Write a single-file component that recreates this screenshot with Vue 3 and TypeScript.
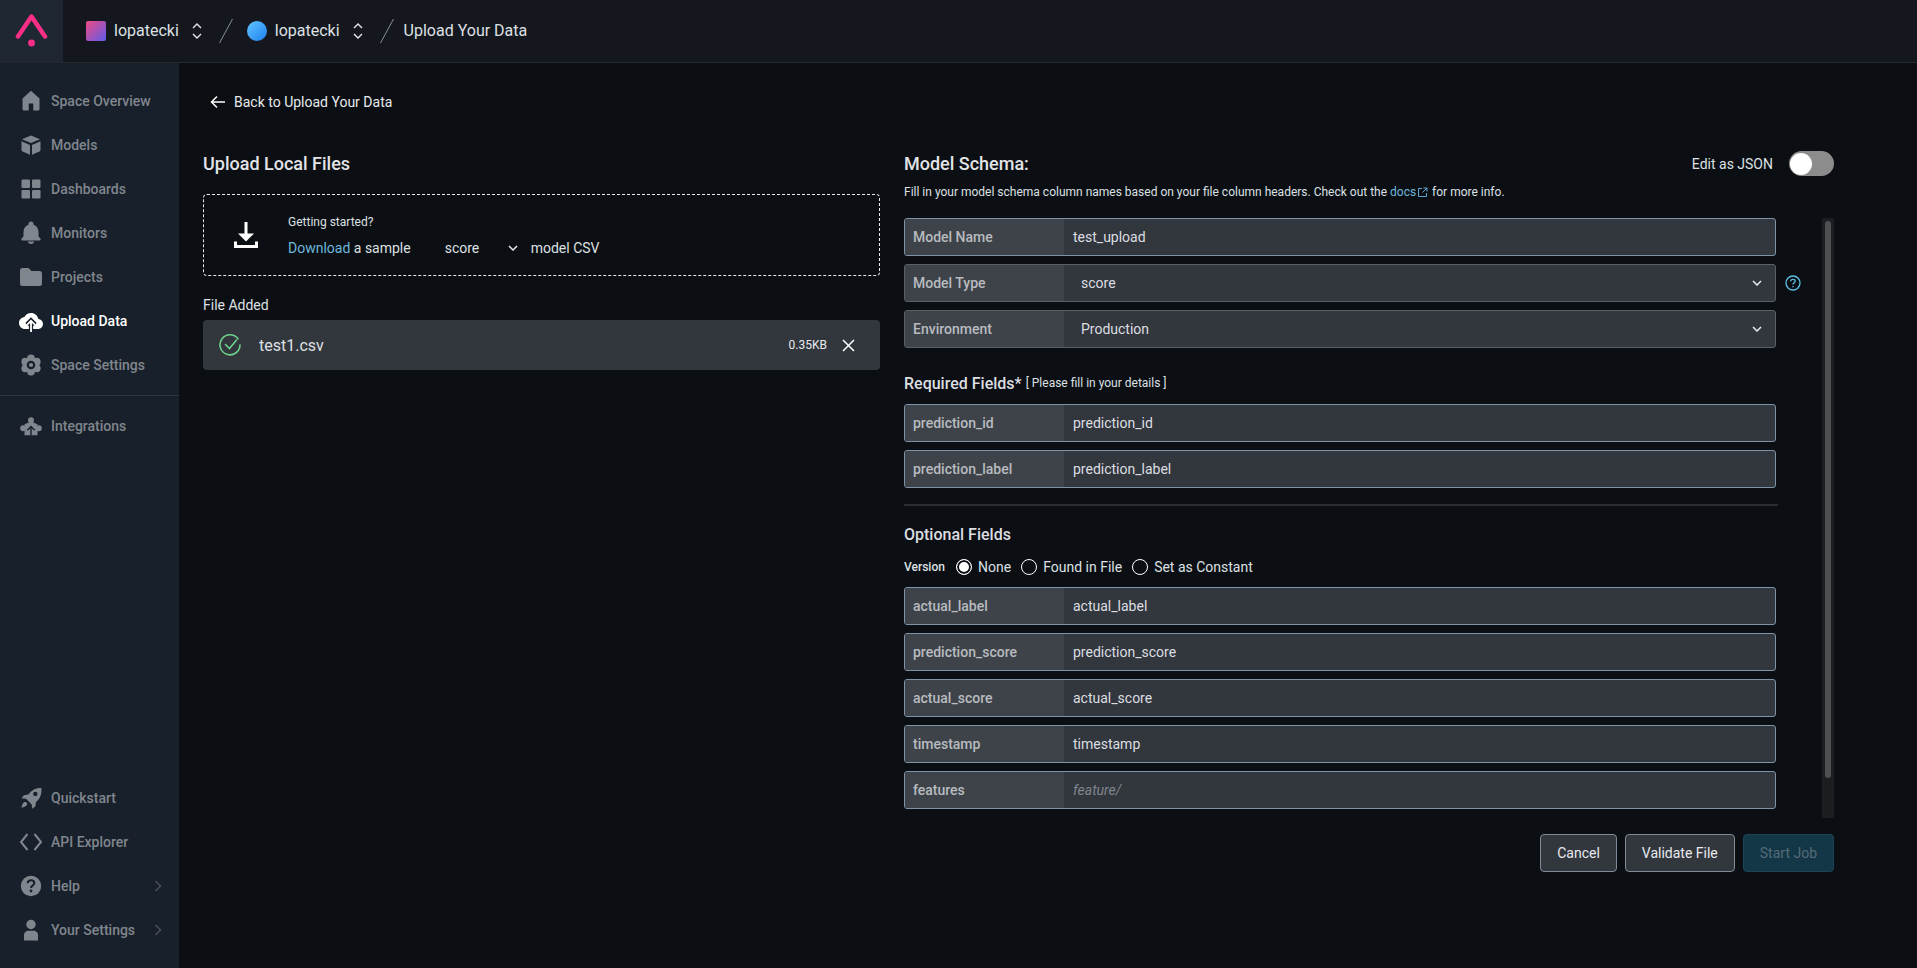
<script setup lang="ts">
interface NavItem { label: string; icon: string; active?: boolean; more?: boolean }
const topNav: NavItem[] = [
  { label: 'Space Overview', icon: 'home' },
  { label: 'Models', icon: 'cube' },
  { label: 'Dashboards', icon: 'grid' },
  { label: 'Monitors', icon: 'bell' },
  { label: 'Projects', icon: 'folder' },
  { label: 'Upload Data', icon: 'cloud', active: true },
  { label: 'Space Settings', icon: 'gear' },
]
const bottomNav: NavItem[] = [
  { label: 'Quickstart', icon: 'rocket' },
  { label: 'API Explorer', icon: 'code' },
  { label: 'Help', icon: 'help', more: true },
  { label: 'Your Settings', icon: 'user', more: true },
]
const gearLobes = [0, 60, 120, 180, 240, 300].map((deg) => ({
  x: 12 + 6.6 * Math.sin((deg * Math.PI) / 180),
  y: 12 - 6.6 * Math.cos((deg * Math.PI) / 180),
}))
const baseFields = [
  { label: 'Model Name', value: 'test_upload', active: true },
  { label: 'Model Type', value: 'score', select: true },
  { label: 'Environment', value: 'Production', select: true },
]
const requiredFields = [
  { label: 'prediction_id', value: 'prediction_id', active: true },
  { label: 'prediction_label', value: 'prediction_label', active: true },
]
const optionalFields = [
  { label: 'actual_label', value: 'actual_label', active: true },
  { label: 'prediction_score', value: 'prediction_score', active: true },
  { label: 'actual_score', value: 'actual_score', active: true },
  { label: 'timestamp', value: 'timestamp', active: true },
  { label: 'features', value: 'feature/', active: true, placeholder: true },
]
const radios = [
  { label: 'None', on: true },
  { label: 'Found in File', on: false },
  { label: 'Set as Constant', on: false },
]
</script>

<template>
  <div class="page">
    <header class="topbar">
      <div class="logo">
        <svg width="34" height="34" viewBox="0 0 34 34" fill="none">
          <path d="M3 22.500 16.500 2.500 30 22.500" stroke="#f92f87" stroke-width="4.500" stroke-linecap="round" stroke-linejoin="round" />
          <circle cx="16.500" cy="29" r="3.400" fill="#f92f87" />
        </svg>
      </div>
      <div class="crumbs">
        <span class="swatch square"></span>
        <span class="crumb">lopatecki</span>
        <svg class="updown" width="12" height="20" viewBox="0 0 12 20" fill="none" stroke="#e4e6e9" stroke-width="1.400"><path d="M2 7 6 3l4 4M2 13l4 4 4-4" /></svg>
        <svg class="slash" width="14" height="24" viewBox="0 0 14 24" fill="none" stroke="#8b9096" stroke-width="1"><path d="M13.500 0 .5 24" /></svg>
        <span class="swatch round"></span>
        <span class="crumb">lopatecki</span>
        <svg class="updown" width="12" height="20" viewBox="0 0 12 20" fill="none" stroke="#e4e6e9" stroke-width="1.400"><path d="M2 7 6 3l4 4M2 13l4 4 4-4" /></svg>
        <svg class="slash slash-last" width="14" height="24" viewBox="0 0 14 24" fill="none" stroke="#8b9096" stroke-width="1"><path d="M13.500 0 .5 24" /></svg>
        <span class="crumb last">Upload Your Data</span>
      </div>
    </header>

    <div class="body">
      <aside class="sidebar">
        <nav class="nav-top">
          <template v-for="item in topNav" :key="item.label">
            <a class="nav-item" :class="{ active: item.active }">
              <span class="nav-icon">
                <svg width="24" height="24" viewBox="0 0 24 24" fill="currentColor">
                  <path v-if="item.icon === 'home'" fill-rule="evenodd" d="M12 1.800 20.500 9.500V20a1.600 1.600 0 0 1-1.600 1.600H5.100A1.600 1.600 0 0 1 3.500 20V9.500ZM9.700 14.500v7.100h4.600v-7.100Z" />
                  <template v-else-if="item.icon === 'cube'">
                    <path d="M12 2.500 21 6.300 12 10 3 6.300Z" />
                    <path d="M2.500 8.300 11 12v9.800L3.600 18.600a1.800 1.800 0 0 1-1.100-1.600Z" />
                    <path d="M21.500 8.300 13 12v9.800l7.400-3.200a1.800 1.800 0 0 0 1.100-1.600Z" />
                  </template>
                  <template v-else-if="item.icon === 'grid'">
                    <rect x="2.500" y="2.500" width="8.500" height="8.500" rx="1.200" />
                    <rect x="13" y="2.500" width="8.500" height="8.500" rx="1.200" />
                    <rect x="2.500" y="13" width="8.500" height="8.500" rx="1.200" />
                    <rect x="13" y="13" width="8.500" height="8.500" rx="1.200" />
                  </template>
                  <path v-else-if="item.icon === 'bell'" d="M12 23c1.700 0 3-1 3.200-2.500H8.800C9 22 10.300 23 12 23Zm7.500-7.500V11c0-3.600-1.800-6.400-5-7.300V3a2.500 2.500 0 0 0-5 0v.7c-3.200.9-5 3.700-5 7.300v4.500L2.600 17.600c-.7.800-.2 1.900.8 1.900h17.200c1 0 1.500-1.100.8-1.900Z" />
                  <path v-else-if="item.icon === 'folder'" d="M9.500 3H3.500A2.500 2.500 0 0 0 1 5.500v13A2.500 2.500 0 0 0 3.500 21h17a2.500 2.500 0 0 0 2.500-2.500v-10A2.500 2.500 0 0 0 20.500 6H12.500Z" />
                  <template v-else-if="item.icon === 'cloud'">
                    <path d="M19.350 10.040C18.670 6.590 15.640 4 12 4 9.110 4 6.600 5.640 5.350 8.040 2.340 8.360 0 10.910 0 14c0 3.310 2.690 6 6 6h13c2.760 0 5-2.240 5-5 0-2.640-2.050-4.780-4.650-4.960Z" />
                    <path d="M12 22V12M7.800 15.500 12 11.300l4.200 4.200" fill="none" stroke="#18202b" stroke-width="4.200" />
                    <path d="M12 23V12M8 15.800 12 11.800l4 4" fill="none" stroke="#fff" stroke-width="1.800" />
                  </template>
                  <template v-else-if="item.icon === 'gear'">
                    <circle v-for="(l, i) in gearLobes" :key="i" :cx="l.x" :cy="l.y" r="3.900" />
                    <circle cx="12" cy="12" r="7" />
                    <circle cx="12" cy="12" r="4.300" fill="#18202b" />
                    <circle cx="12" cy="12" r="2.100" />
                  </template>
                </svg>
              </span>
              <span class="nav-label">{{ item.label }}</span>
            </a>
          </template>
        </nav>
        <div class="nav-divider"></div>
        <a class="nav-item integrations">
          <span class="nav-icon">
            <svg width="26" height="26" viewBox="0 0 26 26" fill="currentColor">
              <circle cx="13" cy="6.800" r="3.200" />
              <circle cx="4.500" cy="15.500" r="3.200" />
              <circle cx="21.500" cy="15.500" r="3.200" />
              <path d="M13 8 20 11.200V23H6V11.200Z" />
              <path d="M13 23v-9M9 17.500l4-4 4 4" fill="none" stroke="#18202b" stroke-width="1.500" />
            </svg>
          </span>
          <span class="nav-label">Integrations</span>
        </a>
        <div class="nav-spacer"></div>
        <nav class="nav-bottom">
          <a v-for="item in bottomNav" :key="item.label" class="nav-item">
            <span class="nav-icon">
              <svg width="24" height="24" viewBox="0 0 24 24" fill="currentColor">
                <template v-if="item.icon === 'rocket'">
                  <path fill-rule="evenodd" d="M22.300 1.700c-5.600.2-10 2.500-13 6.800l-4.400.7-2.300 3 4.500.6 5.600 5.600.6 4.300 3-2.300.7-4.400c4.300-3 6.100-8.700 5.300-14.300Zm-6 4a2.200 2.200 0 1 1 0 4.400 2.200 2.200 0 0 1 0-4.400Z" />
                  <path d="M5.500 16c1.800-.4 3 1 2.600 2.600-.4 1.500-3 2.800-5.600 3.200.4-2.700 1.400-5.400 3-5.800Z" />
                </template>
                <path v-else-if="item.icon === 'code'" d="M8.500 4 2 12l6.500 8M15.500 4 22 12l-6.500 8" fill="none" stroke="currentColor" stroke-width="2" />
                <template v-else-if="item.icon === 'help'">
                  <circle cx="12" cy="12" r="10.200" />
                  <path d="M8.700 9.300c0-1.900 1.400-3 3.300-3s3.300 1.100 3.300 2.800c0 2.400-3.300 2.400-3.300 4.900" fill="none" stroke="#18202b" stroke-width="2.100" />
                  <circle cx="12" cy="17" r="1.400" fill="#18202b" />
                </template>
                <template v-else-if="item.icon === 'user'">
                  <circle cx="12" cy="6.500" r="4.700" />
                  <path d="M5 22.500V17c0-2.600 2-4.200 4-4.200h6c2 0 4 1.600 4 4.200v5.500Z" />
                </template>
              </svg>
            </span>
            <span class="nav-label">{{ item.label }}</span>
            <svg v-if="item.more" class="nav-more" width="8" height="14" viewBox="0 0 8 14" fill="none" stroke="#4a5058" stroke-width="1.500"><path d="m1.500 2 5 5-5 5" /></svg>
          </a>
        </nav>
      </aside>

      <main class="main">
        <a class="back">
          <svg width="16" height="14" viewBox="0 0 16 14" fill="none" stroke="#fff" stroke-width="1.500"><path d="M15 7H1.500M7 1.500 1.500 7 7 12.500" /></svg>
          <span>Back to Upload Your Data</span>
        </a>

        <div class="columns">
          <section class="left">
            <div class="col-head"><h2 class="col-title">Upload Local Files</h2></div>
            <div class="dropbox">
              <svg class="dl-icon" width="24" height="26" viewBox="0 0 24 26" fill="#fff">
                <rect x="10.500" y="0" width="3" height="14" />
                <path d="M4 11.500h16l-8 8Z" />
                <path d="M0 19.500h3v3.500h18v-3.500h3V26H0Z" />
              </svg>
              <div class="drop-text">
                <div class="drop-small">Getting started?</div>
                <div class="drop-line">
                  <span class="link">Download</span>
                  <span>&nbsp;a sample</span>
                  <span class="drop-select">score</span>
                  <svg class="drop-chev" width="10" height="6" viewBox="0 0 10 6" fill="none" stroke="#e4e6e9" stroke-width="1.500"><path d="m1 1 4 4 4-4" /></svg>
                  <span>model CSV</span>
                </div>
              </div>
            </div>
            <div class="file-label">File Added</div>
            <div class="file-row">
              <svg width="22" height="22" viewBox="0 0 22 22" fill="none" stroke="#6ed18a" stroke-width="1.600">
                <path d="M19 4.800A10 10 0 1 0 21 11" stroke-linecap="round" />
                <path d="m6.500 10.500 4 4 7-8.500" stroke-linecap="round" />
              </svg>
              <span class="file-name">test1.csv</span>
              <span class="file-size">0.35KB</span>
              <svg width="13" height="13" viewBox="0 0 13 13" fill="none" stroke="#fff" stroke-width="1.500"><path d="m1 1 11 11M12 1 1 12" /></svg>
            </div>
          </section>

          <section class="right">
            <div class="col-head">
              <h2 class="col-title schema">Model Schema:</h2>
              <span class="json-label">Edit as JSON</span>
              <span class="toggle"><span class="knob"></span></span>
            </div>
            <p class="desc">
              Fill in your model schema column names based on your file column headers. Check out the
              <span class="link">docs</span>
              <svg class="ext" width="11" height="11" viewBox="0 0 11 11" fill="none" stroke="#5fa8d3" stroke-width="1"><path d="M5 1.500H1.500v8h8V6M6.500 1h3.500v3.500M10 1 5.500 5.500" /></svg>
              for more info.
            </p>

            <div class="scroller">
              <div class="form">
                <div v-for="f in baseFields" :key="f.label" class="row-wrap">
                  <div class="field" :class="{ active: f.active }">
                    <span class="field-label">{{ f.label }}</span>
                    <span class="field-value" :class="{ select: f.select }">{{ f.value }}</span>
                    <svg v-if="f.select" class="chev" width="10" height="6" viewBox="0 0 10 6" fill="none" stroke="#e9ebee" stroke-width="1.500"><path d="m1 1 4 4 4-4" /></svg>
                  </div>
                  <svg v-if="f.label === 'Model Type'" class="help" width="16" height="16" viewBox="0 0 16 16" fill="none" stroke="#5fc0e8" stroke-width="1.300">
                    <circle cx="8" cy="8" r="7" />
                    <path d="M5.800 6.300C5.800 5 6.800 4.300 8 4.300s2.200.7 2.200 1.900C10.200 7.800 8 7.800 8 9.600" />
                    <path d="M8 11v1.200" />
                  </svg>
                </div>

                <h3 class="section-title req"><span>Required Fields*</span><small>[ Please fill in your details ]</small></h3>
                <div v-for="f in requiredFields" :key="f.label" class="row-wrap">
                  <div class="field active">
                    <span class="field-label">{{ f.label }}</span>
                    <span class="field-value">{{ f.value }}</span>
                  </div>
                </div>

                <div class="rule"></div>

                <h3 class="section-title opt">Optional Fields</h3>
                <div class="version">
                  <span class="version-label">Version</span>
                  <label v-for="r in radios" :key="r.label" class="radio">
                    <span class="dot" :class="{ on: r.on }"></span>{{ r.label }}
                  </label>
                </div>
                <div v-for="f in optionalFields" :key="f.label" class="row-wrap">
                  <div class="field active">
                    <span class="field-label">{{ f.label }}</span>
                    <span class="field-value" :class="{ placeholder: f.placeholder }">{{ f.value }}</span>
                  </div>
                </div>
              </div>
              <div class="track"><div class="thumb"></div></div>
            </div>

            <div class="actions">
              <button class="btn">Cancel</button>
              <button class="btn">Validate File</button>
              <button class="btn primary">Start Job</button>
            </div>
          </section>
        </div>
      </main>
    </div>
  </div>
</template>

<style>
html, body { margin: 0; background: #0b0f13; }
</style>

<style scoped>
* { box-sizing: border-box; }
.page { width: 1917px; height: 968px; display: flex; flex-direction: column; background: #0b0f13; color: #e8eaed; font-family: Roboto, "Noto Sans", sans-serif; overflow: hidden; }
.topbar { height: 63px; flex: none; display: flex; background: #14171d; border-bottom: 1px solid #23272e; }
.logo { width: 63px; display: flex; align-items: center; justify-content: center; background: #1f2733; }
.crumbs { display: flex; align-items: center; padding-left: 23px; font-size: 16px; color: #dde0e4; }
.swatch { width: 20px; height: 20px; flex: none; margin-right: 8px; }
.square { border-radius: 2px; background: linear-gradient(135deg, #ee4a86, #5f5ce8); }
.round { border-radius: 50%; background: linear-gradient(135deg, #5fc6ff, #1f7fef); }
.crumb { line-height: 20px; }
.updown { margin-left: 12px; }
.slash { margin: 0 14px 0 16px; }
.slash-last { margin-right: 10px; }
.body { flex: 1; display: flex; min-height: 0; }
.sidebar { width: 179px; flex: none; background: #18202b; display: flex; flex-direction: column; padding: 16px 0 16px; }
.nav-item { height: 44px; display: flex; align-items: center; padding-left: 19px; color: #80868d; font-size: 14px; font-weight: 500; }
.nav-item.active { color: #fff; }
.nav-icon { width: 24px; height: 24px; display: flex; align-items: center; justify-content: center; margin-right: 8px; flex: none; }
.nav-more { margin-left: auto; margin-right: 17px; }
.nav-divider { height: 1px; background: #2e3540; margin: 8px 0; }
.nav-spacer { flex: 1; }
.main { flex: 1; padding: 0 83px 0 24px; min-width: 0; }
.back { display: flex; align-items: center; height: 20px; margin-top: 29px; padding-left: 7px; font-size: 14px; color: #e8eaed; }
.back svg { margin-right: 8px; }
.columns { display: flex; gap: 24px; margin-top: 39px; }
.left { width: 677px; flex: none; }
.right { flex: 1; min-width: 0; }
.col-head { height: 25px; display: flex; align-items: center; }
.col-title { margin: 0; font-size: 18px; font-weight: 500; color: #e2e4e7; }
.schema { margin-right: auto; }
.json-label { font-size: 14px; margin-right: 16px; color: #dde0e4; }
.toggle { width: 45px; height: 25px; border-radius: 13px; background: #8c8c8c; display: flex; align-items: center; padding-left: 1px; }
.knob { width: 22px; height: 22px; border-radius: 50%; background: #fff; }
.dropbox { height: 82px; margin-top: 18px; border: 1px dashed #e6e8ea; border-radius: 4px; display: flex; align-items: center; padding-left: 30px; }
.dl-icon { margin-right: 30px; }
.drop-small { font-size: 12px; line-height: 16px; color: #dde0e4; }
.drop-line { display: flex; align-items: center; margin-top: 9px; font-size: 14px; line-height: 18px; color: #dde0e4; }
.link { color: #6db7dc; }
.drop-select { margin-left: 34px; width: 63px; }
.drop-chev { margin-right: 13px; }
.file-label { margin-top: 21px; font-size: 14px; line-height: 16px; color: #dde0e4; }
.file-row { height: 50px; margin-top: 7px; background: #32363d; border-radius: 4px; display: flex; align-items: center; padding: 0 25px 0 16px; }
.file-name { margin-left: 18px; font-size: 16px; color: #dde0e4; }
.file-size { margin-left: auto; margin-right: 15px; font-size: 12px; color: #e8eaed; }
.desc { margin: 8px 0 0; height: 16px; font-size: 12px; line-height: 16px; color: #dde0e4; }
.ext { margin: 0 1px; vertical-align: -1.500px; }
.scroller { display: flex; height: 600px; margin-top: 18px; overflow: hidden; }
.form { flex: 1; min-width: 0; }
.row-wrap { display: flex; align-items: center; height: 38px; margin-bottom: 8px; position: relative; }
.field { width: 872px; height: 38px; flex: none; display: flex; align-items: center; background: #32363d; border: 1px solid #5a6068; border-radius: 3px; overflow: hidden; }
.field.active { border-color: #7f93a8; }
.field-label { width: 159px; height: 100%; flex: none; display: flex; align-items: center; padding-left: 8px; background: #3e434a; color: #b8bbbf; font-size: 14px; font-weight: 500; }
.field-value { padding-left: 9px; font-size: 14px; color: #dcdee1; }
.field-value.select { padding-left: 17px; }
.field-value.placeholder { color: #7f858c; font-style: italic; }
.chev { margin-left: auto; margin-right: 13px; }
.help { margin-left: 9px; }
.section-title { margin: 0; font-weight: 500; font-size: 16px; color: #dcdee1; }
.req { height: 20px; margin-top: 25px; margin-bottom: 11px; display: flex; align-items: center; }
.req small { margin-left: 4px; font-size: 12px; font-weight: 400; color: #dde0e4; }
.rule { width: 874px; height: 2px; background: #2a2e34; margin-top: 16px; }
.opt { height: 20px; line-height: 20px; margin-top: 19px; }
.version { display: flex; align-items: center; height: 22px; margin-top: 11px; margin-bottom: 9px; font-size: 14px; color: #dde0e4; }
.version-label { font-size: 12px; font-weight: 500; width: 52px; }
.radio { display: flex; align-items: center; margin-right: 10px; }
.dot { width: 16px; height: 16px; border: 1.500px solid #fff; border-radius: 50%; margin-right: 6px; flex: none; }
.dot.on { background: #fff; box-shadow: inset 0 0 0 2px #0b0f13; }
.track { width: 12px; flex: none; background: #1b1d21; padding: 3px; }
.thumb { height: 557px; width: 6px; border-radius: 3px; background: #4d4f53; }
.actions { display: flex; justify-content: flex-end; gap: 8px; margin-top: 16px; }
.btn { height: 38px; padding: 0 16px; border: 1px solid #7f8b98; border-radius: 4px; background: #32363d; color: #e8eaed; font: 400 14px Roboto, sans-serif; }
.primary { background: #133747; border-color: #1d4456; color: #546b78; }
</style>
